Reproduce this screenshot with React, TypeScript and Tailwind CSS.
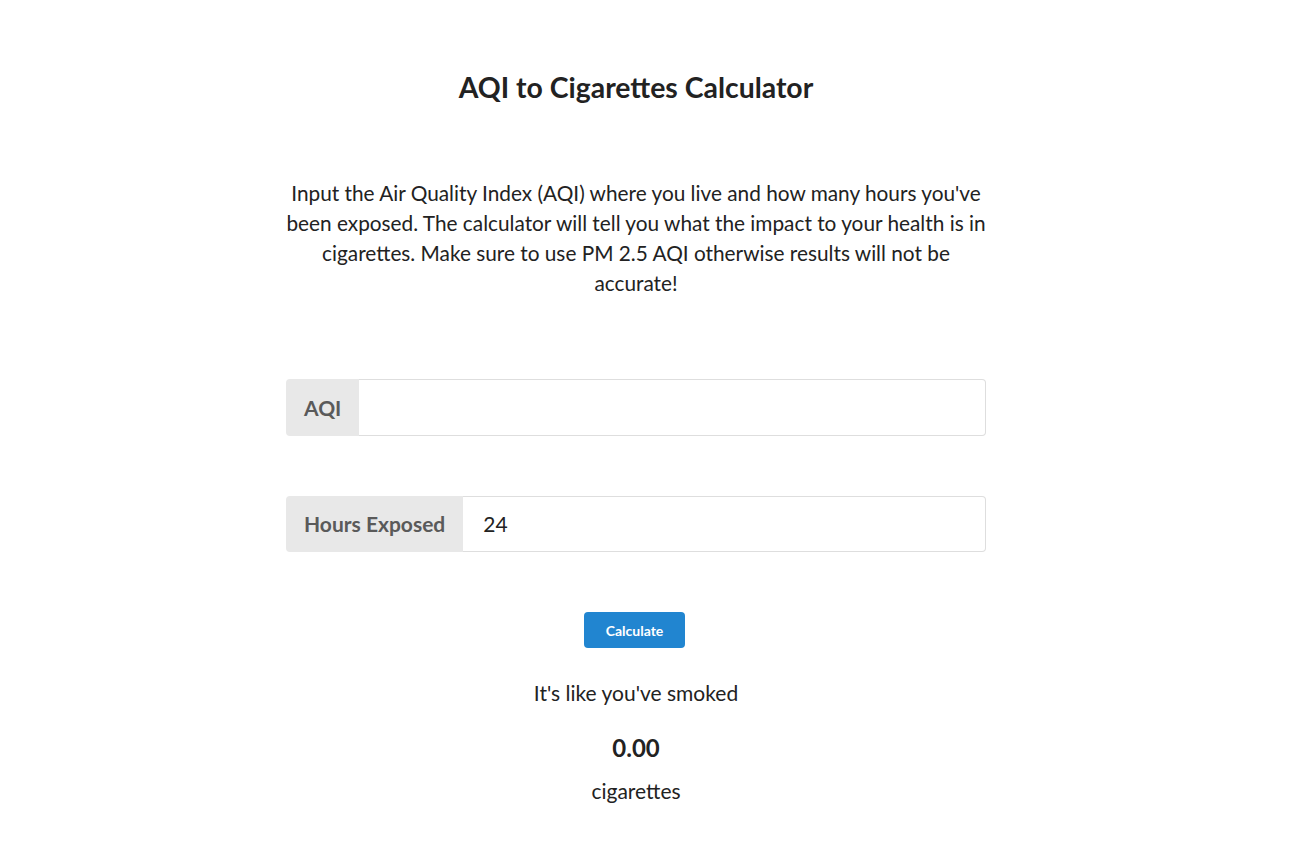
export default function App() {
  return (
    <div className="min-h-screen bg-white font-['Lato',sans-serif] text-[#222]">
      <div className="ml-[286px] flex w-[700px] flex-col items-center pt-[68px]">
        <h1 className="text-[28.4px] font-bold leading-[38px]">AQI to Cigarettes Calculator</h1>

        <p className="mt-[72px] text-center text-[20.8px] leading-[30px]">
          Input the Air Quality Index (AQI) where you live and how many hours you've been exposed. The
          calculator will tell you what the impact to your health is in cigarettes. Make sure to use PM 2.5
          AQI otherwise results will not be accurate!
        </p>

        <div className="mt-[81px] flex h-[57px] w-full">
          <div className="flex items-center rounded-l-[4px] bg-[#e8e8e8] px-[18px] text-[21px] font-bold text-[#5a5a5a]">
            AQI
          </div>
          <input
            className="flex-1 rounded-r-[4px] border border-l-0 border-[#dedede] px-[20px] text-[21px] outline-none"
            defaultValue=""
          />
        </div>

        <div className="mt-[60px] flex h-[56px] w-full">
          <div className="flex items-center rounded-l-[4px] bg-[#e8e8e8] px-[18px] text-[21px] font-bold text-[#5a5a5a]">
            Hours Exposed
          </div>
          <input
            className="flex-1 rounded-r-[4px] border border-l-0 border-[#dedede] px-[20px] text-[21px] text-[#222] outline-none"
            defaultValue="24"
          />
        </div>

        <button className="mt-[60px] mr-[3px] h-[36px] w-[101px] rounded-[4px] bg-[#2185d0] text-[14px] font-bold text-white">
          Calculate
        </button>

        <p className="mt-[30px] text-[21px] leading-[30px]">It's like you've smoked</p>
        <p className="mt-[25px] text-[24px] font-bold leading-[30px]">0.00</p>
        <p className="mt-[13px] text-[21px] leading-[30px]">cigarettes</p>
      </div>
    </div>
  )
}
